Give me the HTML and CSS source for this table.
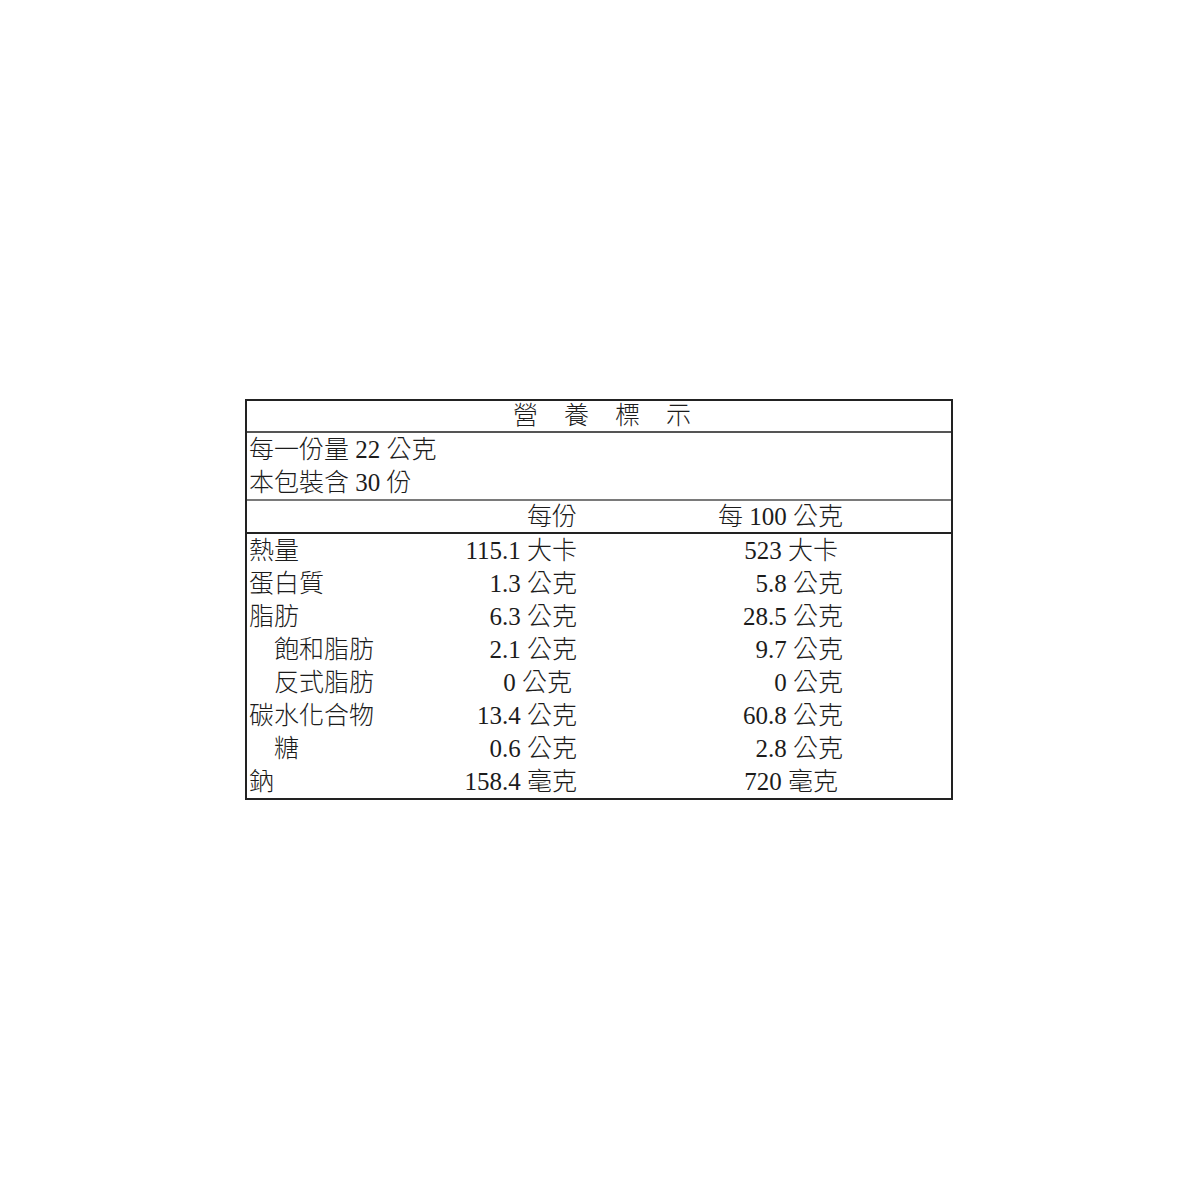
FILE: index.html
```html
<!DOCTYPE html>
<html lang="zh-Hant">
<head>
<meta charset="utf-8">
<title>營養標示</title>
<link rel="stylesheet" href="styles.css">
</head>
<body>
<div class="page">
  <div class="label">
    <div class="title"><span>營</span><span>養</span><span>標</span><span>示</span></div>
    <div class="serving">
      <div class="line">每一份量 22 公克</div>
      <div class="line">本包裝含 30 份</div>
    </div>
    <div class="row head">
      <div class="name"></div>
      <div class="val">每份</div>
      <div class="val">每 100 公克</div>
    </div>
    <div class="data">
      <div class="row">
        <div class="name">熱量</div>
        <div class="val">115.1 大卡</div>
        <div class="val sp">523 大卡</div>
      </div>
      <div class="row">
        <div class="name">蛋白質</div>
        <div class="val">1.3 公克</div>
        <div class="val">5.8 公克</div>
      </div>
      <div class="row">
        <div class="name">脂肪</div>
        <div class="val">6.3 公克</div>
        <div class="val">28.5 公克</div>
      </div>
      <div class="row">
        <div class="name sub">飽和脂肪</div>
        <div class="val">2.1 公克</div>
        <div class="val">9.7 公克</div>
      </div>
      <div class="row">
        <div class="name sub">反式脂肪</div>
        <div class="val sp">0 公克</div>
        <div class="val">0 公克</div>
      </div>
      <div class="row">
        <div class="name">碳水化合物</div>
        <div class="val">13.4 公克</div>
        <div class="val">60.8 公克</div>
      </div>
      <div class="row">
        <div class="name sub">糖</div>
        <div class="val">0.6 公克</div>
        <div class="val">2.8 公克</div>
      </div>
      <div class="row">
        <div class="name">鈉</div>
        <div class="val">158.4 毫克</div>
        <div class="val sp">720 毫克</div>
      </div>
    </div>
  </div>
</div>
</body>
</html>
```
FILE: styles.css
```css
html, body {
  margin: 0;
  padding: 0;
  background: #ffffff;
}

.page {
  padding-top: 399px;
  padding-left: 245px;
  font-family: "Liberation Serif", "Noto Sans CJK TC", serif;
  font-size: 25px;
  color: #1c1c1c;
}

.label {
  width: 704px;
  border: 2px solid #222;
}

.title {
  height: 30px;
  line-height: 30px;
  display: flex;
  justify-content: center;
  gap: 26px;
  padding-left: 6px;
  border-bottom: 2px solid #555;
  font-weight: 300;
}

.serving {
  padding-left: 2px;
  border-bottom: 2px solid #7a7a7a;
}

.line {
  height: 33px;
  line-height: 33px;
  font-weight: 300;
}

.row {
  display: grid;
  grid-template-columns: 180px 148px 266px;
  padding-left: 2px;
  height: 33px;
  line-height: 33px;
  font-weight: 300;
}

.row.head {
  height: 31px;
  line-height: 31px;
  border-bottom: 2px solid #222;
}

.name {
  white-space: nowrap;
}

.name.sub {
  padding-left: 25px;
}

.val {
  text-align: right;
  white-space: nowrap;
}

.val.sp {
  padding-right: 5px;
}
```
